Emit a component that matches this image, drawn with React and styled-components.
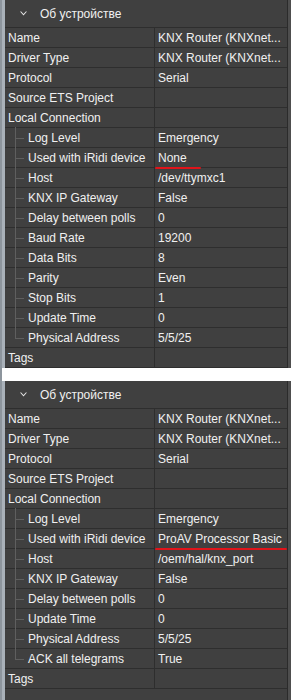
import styled, { createGlobalStyle } from 'styled-components'

const GlobalStyle = createGlobalStyle`
  body {
    margin: 0;
    background: #ffffff;
    font-family: "Liberation Sans", Arial, sans-serif;
  }
`

const deviceRows = [
  { label: 'Name', value: 'KNX Router (KNXnet...' },
  { label: 'Driver Type', value: 'KNX Router (KNXnet...' },
  { label: 'Protocol', value: 'Serial' },
  { label: 'Source ETS Project', value: '' },
  { label: 'Local Connection', value: '' },
]

const firstChildren = [
  ['Log Level', 'Emergency'],
  ['Used with iRidi device', 'None', 46],
  ['Host', '/dev/ttymxc1'],
  ['KNX IP Gateway', 'False'],
  ['Delay between polls', '0'],
  ['Baud Rate', '19200'],
  ['Data Bits', '8'],
  ['Parity', 'Even'],
  ['Stop Bits', '1'],
  ['Update Time', '0'],
  ['Physical Address', '5/5/25'],
]

const secondChildren = [
  ['Log Level', 'Emergency'],
  ['Used with iRidi device', 'ProAV Processor Basic', 132],
  ['Host', '/oem/hal/knx_port'],
  ['KNX IP Gateway', 'False'],
  ['Delay between polls', '0'],
  ['Update Time', '0'],
  ['Physical Address', '5/5/25'],
  ['ACK all telegrams', 'True'],
]

function PropertyPanel({ children: kids, tail }) {
  return (
    <Panel $tail={tail}>
      <Body>
        <Header>
          <Chevron viewBox="0 0 7 5">
            <path d="M0 0.5 L3.5 4.5 L7 0.5 L5.8 0.5 L3.5 3 L1.2 0.5 Z" fill="#e6e6e6" />
          </Chevron>
          Об устройстве
        </Header>
        {deviceRows.map((r) => (
          <Row key={r.label}>
            <Label>{r.label}</Label>
            <Value>{r.value && <ValueText>{r.value}</ValueText>}</Value>
          </Row>
        ))}
        {kids.map(([label, value, mark], i) => (
          <Row key={label}>
            <Label $child $last={i === kids.length - 1}>{label}</Label>
            <Value>
              <ValueText>{value}</ValueText>
              {mark && <Underline $width={mark} />}
            </Value>
          </Row>
        ))}
        <Row>
          <Label>Tags</Label>
          <Value />
        </Row>
      </Body>
    </Panel>
  )
}

function App() {
  return (
    <>
      <GlobalStyle />
      <Frame>
        <PropertyPanel children={firstChildren} />
        <Gap />
        <PropertyPanel children={secondChildren} tail />
      </Frame>
    </>
  )
}

const Frame = styled.div`
  width: 289px;
  height: 700px;
  border-left: 2px solid #8d959d;
  display: flex;
  flex-direction: column;
  overflow: hidden;
`

const Gap = styled.div`
  height: 13px;
  flex-shrink: 0;
  background: #ffffff;
`

const Panel = styled.div`
  display: flex;
  flex-shrink: 0;
  flex-grow: ${(p) => (p.$tail ? 1 : 0)};
  background: #404040;
  border-left: 3px solid #a9b1b9;
  border-right: 3px solid #4e4e4e;
`

const Body = styled.div`
  flex: 1;
  display: flex;
  flex-direction: column;
  border-right: 1px solid #2b2b2b;
  color: #f0f0f0;
  font-size: 12px;
`

const Header = styled.div`
  height: 27px;
  display: flex;
  align-items: center;
  gap: 13px;
  padding-left: 15px;
  border-bottom: 1px solid #2e2e2e;
`

const Chevron = styled.svg`
  width: 7px;
  height: 5px;
`

const Row = styled.div`
  display: grid;
  grid-template-columns: 149px 1fr;
  height: 19px;
  border-bottom: 1px solid #2e2e2e;
`

const Label = styled.div`
  position: relative;
  display: flex;
  align-items: center;
  padding-left: ${(p) => (p.$child ? '23px' : '3px')};
  white-space: nowrap;

  ${(p) =>
    p.$child &&
    `
    &::before {
      content: '';
      position: absolute;
      left: 10px;
      top: -1px;
      height: ${p.$last ? '11px' : '21px'};
      border-left: 1px solid #5f5f5f;
    }
    &::after {
      content: '';
      position: absolute;
      left: 10px;
      top: 10px;
      width: 9px;
      border-top: 1px solid #5f5f5f;
    }
  `}
`

const Value = styled.div`
  position: relative;
  display: flex;
  align-items: center;
  min-width: 0;
  padding-left: 3px;
  border-left: 1px solid #2e2e2e;
`

const ValueText = styled.span`
  white-space: nowrap;
`

const Underline = styled.span`
  position: absolute;
  left: 0px;
  bottom: -2px;
  width: ${(p) => p.$width}px;
  height: 2px;
  border-radius: 2px;
  background: #e0141a;
`

export default App
